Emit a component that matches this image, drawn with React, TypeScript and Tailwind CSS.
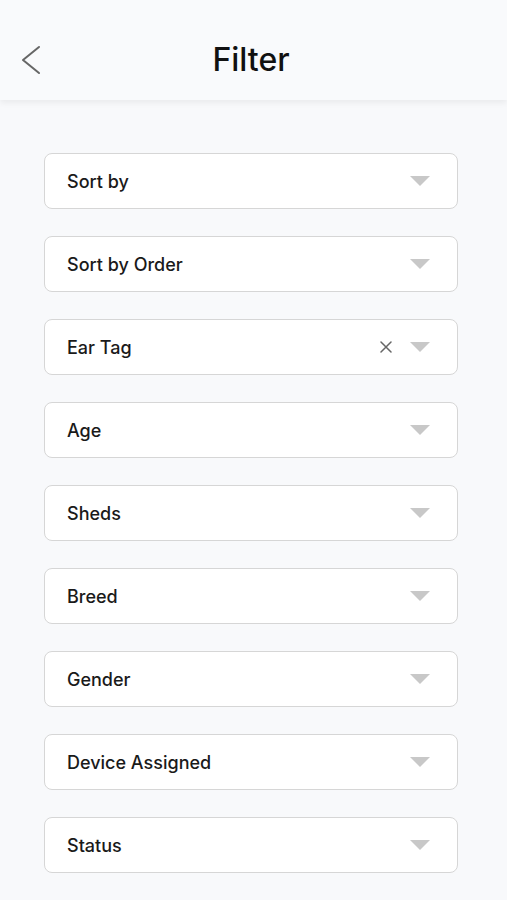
const fields = [
  { label: "Sort by" },
  { label: "Sort by Order" },
  { label: "Ear Tag", clearable: true },
  { label: "Age" },
  { label: "Sheds" },
  { label: "Breed" },
  { label: "Gender" },
  { label: "Device Assigned" },
  { label: "Status" },
];

function Select({ label, clearable }: { label: string; clearable?: boolean }) {
  return (
    <div className="flex h-[56px] items-center rounded-[8px] border border-[#d6d6d6] bg-white pl-[22px] pr-[27px]">
      <span className="flex-1 text-[18px] font-medium text-[#1a1a1a]">{label}</span>
      {clearable && (
        <svg width="12" height="12" viewBox="0 0 12 12" className="mr-[18px]">
          <path d="M1 1L11 11M11 1L1 11" stroke="#666" strokeWidth="1.5" strokeLinecap="round" />
        </svg>
      )}
      <svg width="20" height="10" viewBox="0 0 20 10">
        <path d="M0 0H20L10 10Z" fill="#c8c8c8" />
      </svg>
    </div>
  );
}

export default function App() {
  return (
    <div className="min-h-[900px] bg-[#f8f9fb]" style={{ fontFamily: "Inter, 'Noto Sans', sans-serif" }}>
      {/* Header */}
      <div className="relative flex h-[100px] items-center justify-center bg-[#f9fafc] pt-[20px] pr-[5px] shadow-[0_3px_6px_rgba(0,0,0,0.06)]">
        <svg width="22" height="30" viewBox="0 0 22 30" className="absolute left-[20px] top-[45px]">
          <path d="M19 2L3 15L19 28" fill="none" stroke="#666" strokeWidth="2" strokeLinecap="round" strokeLinejoin="round" />
        </svg>
        <h1 className="text-[32px] font-medium text-[#111]">Filter</h1>
      </div>

      {/* Fields */}
      <div className="flex flex-col gap-[27px] px-[44px] pt-[53px] pr-[49px]">
        {fields.map((f) => (
          <Select key={f.label} label={f.label} clearable={f.clearable} />
        ))}
      </div>
    </div>
  );
}
